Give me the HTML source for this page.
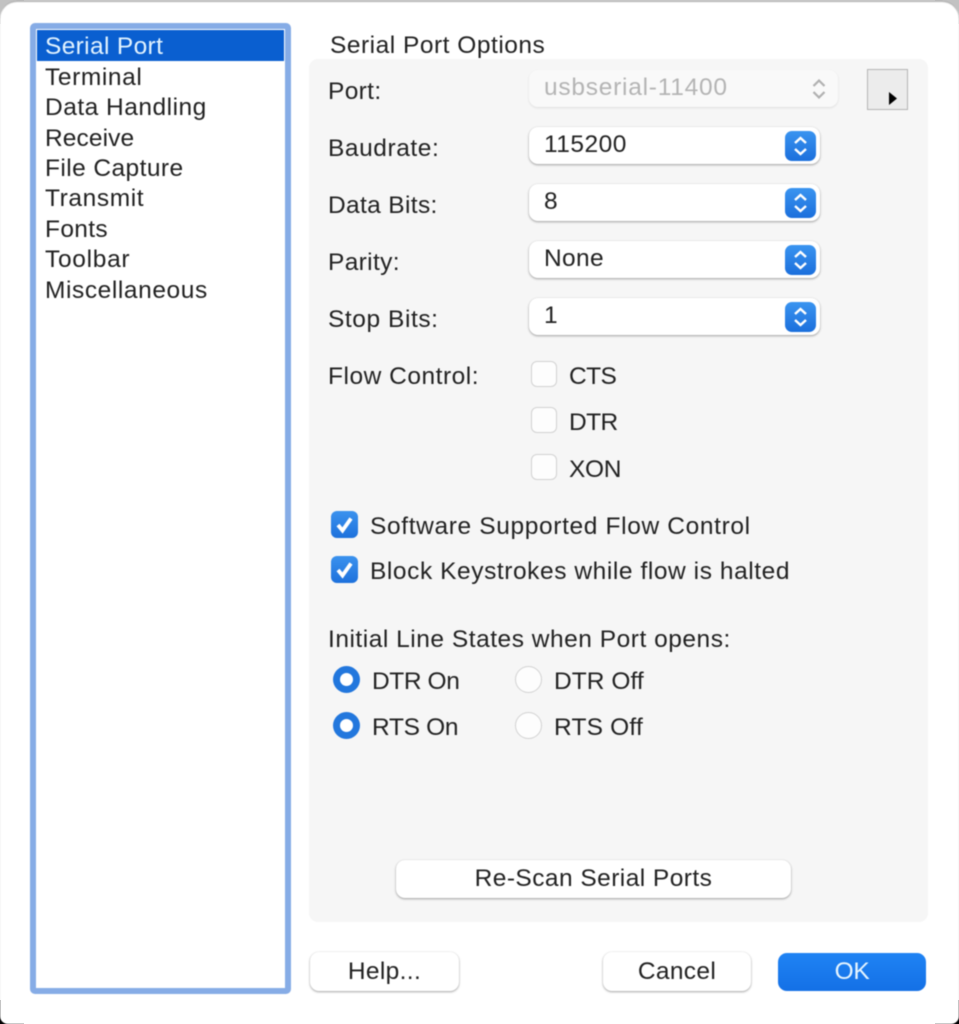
<!DOCTYPE html>
<html><head><meta charset="utf-8"><style>
html,body{margin:0;padding:0;width:959px;height:1024px;overflow:hidden;background:#fff}
.c{position:absolute;width:24px;height:24px}
#w{position:absolute;left:0;top:0;width:959px;height:1024px;overflow:hidden;background:#fff;border-radius:17px 17px 8px 8px;box-shadow:inset 0 2px 1px #b5b5b5;filter:blur(.45px)}
.t{position:absolute;font-family:"Liberation Sans",sans-serif;font-size:24.5px;line-height:30px;color:#222;white-space:nowrap;letter-spacing:.35px}
.a{position:absolute;box-sizing:border-box}
.pop{background:#fff;border-radius:9px;box-shadow:0 1px 2px rgba(0,0,0,.35),0 0 1px rgba(0,0,0,.12);height:37px;width:291px;left:529px}
.st{left:785px;width:31px;height:30px;border-radius:7px;background:linear-gradient(#3a94f0,#1b6fdc)}
.cb{width:26px;height:26px;border-radius:6px;background:#fdfdfd;border:1.5px solid #d2d2d2;left:531px}
.ck{width:27px;height:27px;border-radius:6px;background:linear-gradient(#3b92ee,#1d71dc);left:331px}
.r{width:27px;height:27px;border-radius:50%;left:333px;background:#2277dd}
.r:after{content:"";position:absolute;left:7px;top:7px;width:13px;height:13px;border-radius:50%;background:#fff}
.ro{width:27px;height:27px;border-radius:50%;left:515px;background:#fdfdfd;border:1.5px solid #d2d2d2}
.b{background:#fff;border-radius:9px;box-shadow:0 1px 2px rgba(0,0,0,.35),0 0 1px rgba(0,0,0,.15)}
svg{position:absolute;overflow:visible}
</style></head><body>
<div class="c" style="left:0;top:0;background:#c2c2c2"></div>
<div class="c" style="right:0;top:0;background:#c2c2c2"></div>
<div class="c" style="left:0;bottom:0;background:#000"></div>
<div class="c" style="right:0;bottom:0;background:#000"></div>
<div id="w">
<div class="a" style="left:30px;top:23px;width:261px;height:971px;background:#fff;border:6px solid #86ace6;border-radius:5px"></div>
<div class="a" style="left:37px;top:30px;width:247px;height:31px;background:#0a5fd0"></div>
<div class="t" style="left:45px;top:32px;color:#e2f3ff">Serial Port</div>
<div class="t" style="left:45px;top:63px;letter-spacing:.6px">Terminal</div>
<div class="t" style="left:45px;top:93px;letter-spacing:.5px">Data Handling</div>
<div class="t" style="left:45px;top:124px;letter-spacing:.1px">Receive</div>
<div class="t" style="left:45px;top:154px;letter-spacing:.42px">File Capture</div>
<div class="t" style="left:45px;top:184px;letter-spacing:.6px">Transmit</div>
<div class="t" style="left:45px;top:215px">Fonts</div>
<div class="t" style="left:45px;top:245px;letter-spacing:.7px">Toolbar</div>
<div class="t" style="left:45px;top:276px;letter-spacing:.58px">Miscellaneous</div>

<div class="a" style="left:309px;top:59px;width:619px;height:863px;background:#f6f6f6;border-radius:9px"></div>
<div class="t" style="left:330px;top:31px;letter-spacing:.51px">Serial Port Options</div>

<div class="t" style="left:328px;top:77px">Port:</div>
<div class="a" style="left:529px;top:70px;width:309px;height:37px;background:#f9f9f9;border-radius:9px;box-shadow:0 1px 2px rgba(0,0,0,.1)"></div>
<div class="t" style="left:544px;top:73px;color:#b4b4b4;letter-spacing:.75px">usbserial-11400</div>
<svg style="left:812px;top:78px" width="14" height="22" fill="none" stroke="#b0b0b0" stroke-width="2.2"><path d="M1.5 8 7 2.5 12.500 8M1.500 14 7 19.500 12.500 14"/></svg>
<div class="a" style="left:867px;top:69px;width:41px;height:41px;background:#ececec;border:1.5px solid #b4b4b4"></div>
<svg style="left:889px;top:92px" width="9" height="13"><path d="M0 0 8 6.500 0 13Z" fill="#000"/></svg>

<div class="t" style="left:328px;top:134px;letter-spacing:.57px">Baudrate:</div>
<div class="a pop" style="top:127px"></div><div class="a st" style="top:131px"></div>
<div class="t" style="left:544px;top:130px;letter-spacing:.5px">115200</div>
<div class="t" style="left:328px;top:191px">Data Bits:</div>
<div class="a pop" style="top:184px"></div><div class="a st" style="top:188px"></div>
<div class="t" style="left:544px;top:187px">8</div>
<div class="t" style="left:328px;top:248px">Parity:</div>
<div class="a pop" style="top:241px"></div><div class="a st" style="top:245px"></div>
<div class="t" style="left:544px;top:244px">None</div>
<div class="t" style="left:328px;top:305px;letter-spacing:.57px">Stop Bits:</div>
<div class="a pop" style="top:298px"></div><div class="a st" style="top:302px"></div>
<div class="t" style="left:544px;top:301px">1</div>
<svg style="left:792px;top:135px" width="18" height="22" fill="none" stroke="#fff" stroke-width="2.400"><path d="M3 8 8.500 3 14 8M3 14 8.500 19 14 14"/></svg>
<svg style="left:792px;top:192px" width="18" height="22" fill="none" stroke="#fff" stroke-width="2.400"><path d="M3 8 8.500 3 14 8M3 14 8.500 19 14 14"/></svg>
<svg style="left:792px;top:249px" width="18" height="22" fill="none" stroke="#fff" stroke-width="2.400"><path d="M3 8 8.500 3 14 8M3 14 8.500 19 14 14"/></svg>
<svg style="left:792px;top:306px" width="18" height="22" fill="none" stroke="#fff" stroke-width="2.400"><path d="M3 8 8.500 3 14 8M3 14 8.500 19 14 14"/></svg>

<div class="t" style="left:328px;top:362px;letter-spacing:.52px">Flow Control:</div>
<div class="a cb" style="top:361px"></div><div class="t" style="left:569px;top:362px;letter-spacing:-.6px">CTS</div>
<div class="a cb" style="top:407px"></div><div class="t" style="left:569px;top:408px;letter-spacing:-.6px">DTR</div>
<div class="a cb" style="top:454px"></div><div class="t" style="left:569px;top:455px;letter-spacing:-.3px">XON</div>

<div class="a ck" style="top:511px"></div>
<svg style="left:331px;top:511px" width="27" height="27" fill="none" stroke="#fff" stroke-width="3.800"><path d="M7 14 11.500 19.500 20 7.500"/></svg>
<div class="t" style="left:370px;top:512px;letter-spacing:.64px">Software Supported Flow Control</div>
<div class="a ck" style="top:556px"></div>
<svg style="left:331px;top:556px" width="27" height="27" fill="none" stroke="#fff" stroke-width="3.800"><path d="M7 14 11.500 19.500 20 7.500"/></svg>
<div class="t" style="left:370px;top:557px;letter-spacing:.57px">Block Keystrokes while flow is halted</div>

<div class="t" style="left:328px;top:625px;letter-spacing:.52px">Initial Line States when Port opens:</div>
<div class="a r" style="top:666px"></div><div class="t" style="left:372px;top:667px;letter-spacing:-.4px">DTR On</div>
<div class="a ro" style="top:666px"></div><div class="t" style="left:554px;top:667px;letter-spacing:.05px">DTR Off</div>
<div class="a r" style="top:712px"></div><div class="t" style="left:372px;top:713px;letter-spacing:-.3px">RTS On</div>
<div class="a ro" style="top:712px"></div><div class="t" style="left:554px;top:713px;letter-spacing:.2px">RTS Off</div>

<div class="a b" style="left:396px;top:860px;width:395px;height:38px"></div>
<div class="t" style="left:396px;width:395px;text-align:center;top:864px;letter-spacing:.45px">Re-Scan Serial Ports</div>
<div class="a b" style="left:310px;top:952px;width:149px;height:39px"></div>
<div class="t" style="left:310px;width:149px;text-align:center;top:957px">Help...</div>
<div class="a b" style="left:603px;top:952px;width:148px;height:39px"></div>
<div class="t" style="left:603px;width:148px;text-align:center;top:957px">Cancel</div>
<div class="a" style="left:778px;top:953px;width:148px;height:38px;border-radius:9px;background:linear-gradient(#1f83f4,#1470e6)"></div>
<div class="t" style="left:778px;width:148px;text-align:center;top:957px;color:#e6f5ff;letter-spacing:-.3px">OK</div>
</div></body></html>
